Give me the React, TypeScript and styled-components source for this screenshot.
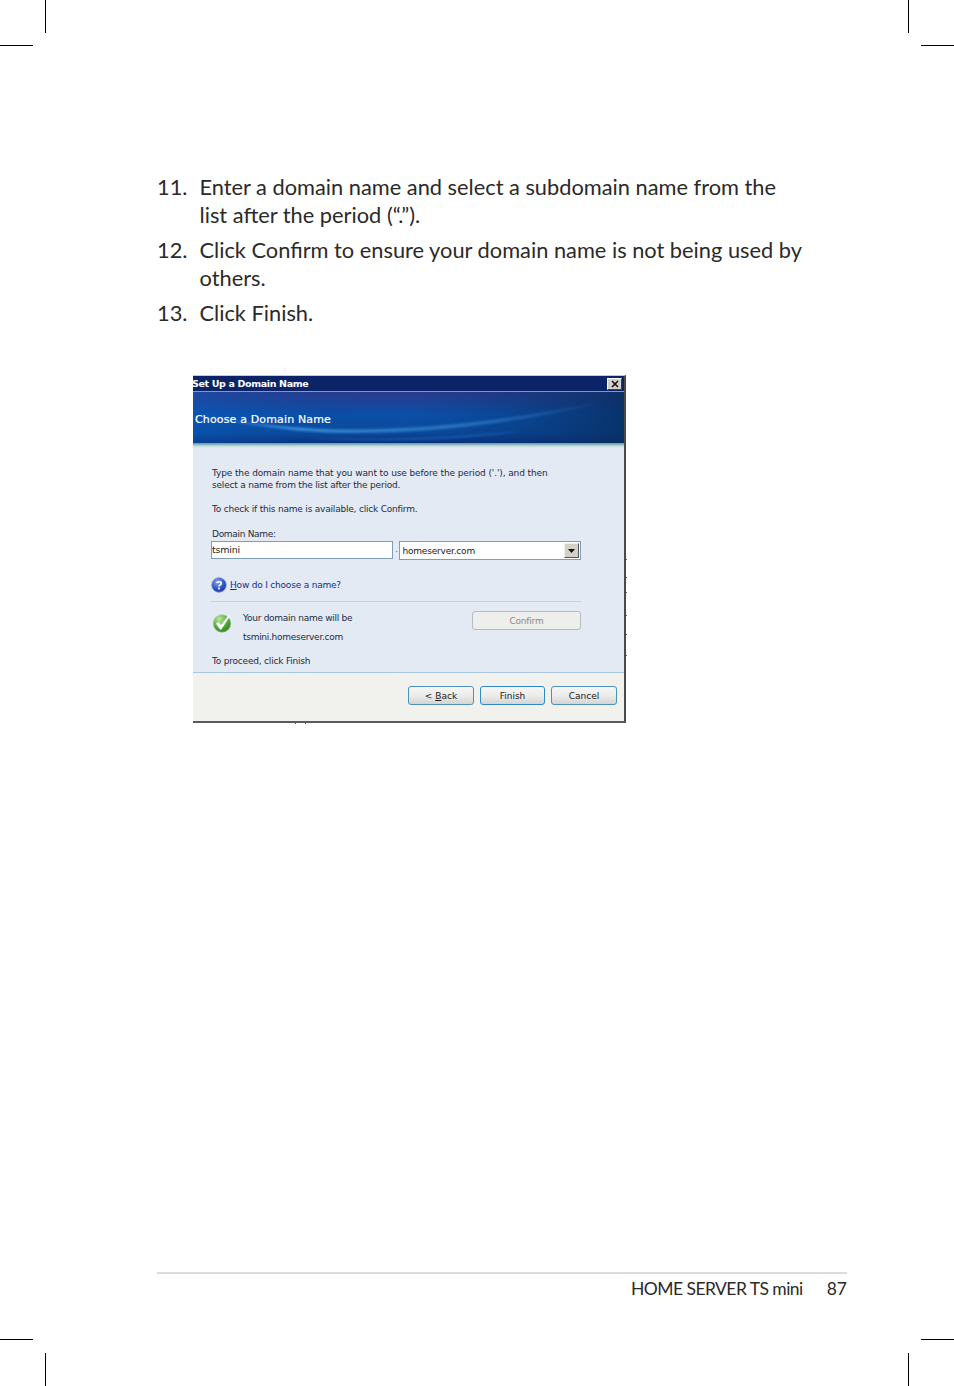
import { FunctionComponent } from 'react';
import styled, { createGlobalStyle } from 'styled-components';

const GlobalStyle = createGlobalStyle`
	html,
	body {
		margin: 0;
		padding: 0;
		background: #fff;
	}
`;

const Page = styled.div`
	position: relative;
	box-sizing: border-box;
	width: 954px;
	height: 1386px;
	padding: 173px 107px 0 157px;
	display: flex;
	flex-direction: column;
	font-family: Lato, 'Noto Sans', sans-serif;
	color: #2b2a29;
	overflow: hidden;
`;

const CropMark = styled.div<{ $x: number; $y: number; $w: number; $h: number }>`
	position: absolute;
	left: ${p => p.$x}px;
	top: ${p => p.$y}px;
	width: ${p => p.$w}px;
	height: ${p => p.$h}px;
	background: #000;
`;

const Steps = styled.ol`
	list-style: none;
	margin: 0;
	padding: 0;
	display: flex;
	flex-direction: column;
	gap: 7px;
`;

const Step = styled.li`
	display: grid;
	grid-template-columns: 42.5px 1fr;
	font-size: 21.8px;
	line-height: 28px;
`;

const Dialog = styled.div`
	position: relative;
	box-sizing: border-box;
	width: 433px;
	height: 348px;
	margin: 48px 0 0 36px;
	display: flex;
	flex-direction: column;
	border-top: 1px solid #c9c9c9;
	border-right: 2px solid #4a4a4a;
	border-bottom: 2px solid #5a5a5a;
	font-family: 'DejaVu Sans', sans-serif;
	font-size: 9px;
	color: #1d2a44;
`;

const EdgeTick = styled.div<{ $x: number; $y: number }>`
	position: absolute;
	left: ${p => p.$x}px;
	top: ${p => p.$y}px;
	width: 1px;
	height: 1px;
	background: #3d5a70;
`;

const TitleBar = styled.div`
	height: 15px;
	flex: none;
	display: flex;
	align-items: center;
	justify-content: space-between;
	box-sizing: content-box;
	background: #0b2468;
	color: #fff;
	font-size: 9.5px;
	font-weight: 700;
	border-bottom: 1px solid #8a97b4;
	padding-right: 2px;
`;

const TitleText = styled.span`
	margin-left: -1px;
	letter-spacing: -0.35px;
`;

const CloseBox = styled.div`
	width: 15px;
	height: 12px;
	display: flex;
	align-items: center;
	justify-content: center;
	background: #d4d0c8;
	border: 1px solid #fff;
	border-right-color: #404040;
	border-bottom-color: #404040;
	box-sizing: border-box;
`;

const Banner = styled.div`
	position: relative;
	flex: none;
	height: 47px;
	display: flex;
	align-items: center;
	padding: 4px 2px 0;
	background: #0a4a9e;
	overflow: hidden;
`;

const BannerArt = styled.svg`
	position: absolute;
	left: 0;
	top: 0;
	width: 100%;
	height: 100%;
`;

const BannerTitle = styled.div`
	position: relative;
	color: #fff;
	font-size: 11px;
	letter-spacing: 0.15px;
	-webkit-text-stroke: 0.2px #fff;
`;

const BannerEdge = styled.div`
	flex: none;
	height: 5px;
	background: linear-gradient(#6f92b4 0%, #7fb0bc 25%, #c3dcd8 60%, #e3eaf3 100%);
`;

const Body = styled.div`
	flex: 1;
	display: flex;
	flex-direction: column;
	padding: 19px 43px 0 19px;
	background: #e3eaf3;
	line-height: 12px;
	letter-spacing: -0.2px;
`;

const Paragraph = styled.p`
	margin: 0 0 12px;
	white-space: nowrap;
`;

const LooseLine = styled.span`
	letter-spacing: -0.115px;
`;

const FieldLabel = styled.div`
	margin-top: 1px;
	letter-spacing: -0.3px;
`;

const DomainRow = styled.div`
	display: flex;
	align-items: flex-start;
	margin: 1px 0 0 -1px;
	gap: 2px;
`;

const NameInput = styled.div`
	box-sizing: border-box;
	width: 182px;
	height: 18px;
	padding: 1px 0 0 0;
	background: #fff;
	border: 1px solid #7f9db9;
	color: #222;
	font-size: 9.5px;
	letter-spacing: -0.2px;
	line-height: 14px;
`;

const Dot = styled.span`
	width: 4px;
	text-align: center;
	line-height: 18px;
	font-size: 7px;
`;

const Combo = styled.div`
	box-sizing: border-box;
	width: 182px;
	height: 19px;
	margin-left: -1px;
	display: flex;
	align-items: center;
	justify-content: space-between;
	padding: 0 1px 0 2px;
	background: #fff;
	border: 1px solid #7f9db9;
	color: #222;
`;

const ComboArrow = styled.div`
	width: 15px;
	height: 15px;
	display: flex;
	align-items: center;
	justify-content: center;
	box-sizing: border-box;
	background: #d4d0c8;
	border: 1px solid #f2f0ea;
	border-right-color: #555;
	border-bottom-color: #555;
`;

const HelpRow = styled.div`
	display: flex;
	align-items: center;
	gap: 3px;
	margin: 17px 0 0 -1px;
`;

const HelpLink = styled.a`
	color: #0f2f92;
	text-decoration: none;

	u {
		text-decoration: underline;
	}
`;

const Rule = styled.div`
	height: 1px;
	background: #c8ced6;
	margin: 8px 0 0 -1px;
`;

const StatusRow = styled.div`
	display: flex;
	align-items: flex-start;
	margin-top: 9px;
`;

const StatusIcon = styled.div`
	width: 31px;
	flex: none;
	padding-top: 2px;
`;

const StatusText = styled.div`
	flex: 1;
	display: flex;
	flex-direction: column;
	gap: 7px;
	padding-top: 1px;
	letter-spacing: -0.28px;
`;

const ButtonFace = styled.div<{ $w: number; $focus?: boolean }>`
	box-sizing: border-box;
	width: ${p => p.$w}px;
	height: 19px;
	display: flex;
	align-items: center;
	justify-content: center;
	border: 1px solid ${p => (p.$focus ? '#2f86c8' : '#4f8fb8')};
	border-radius: 3px;
	background: linear-gradient(#f6f6f4 0%, #ececea 50%, #d4d5d3 100%);
	color: #222;
`;

const ConfirmButton = styled(ButtonFace)`
	border-color: #b5bcc4;
	background: #eeeeec;
	color: #8a8a8a;
`;

const Proceed = styled.div`
	margin-top: 12px;
`;

const DialogFooter = styled.div`
	flex: none;
	height: 49px;
	display: flex;
	justify-content: flex-end;
	gap: 6px;
	padding: 13px 7px 0 0;
	box-sizing: border-box;
	background: #f1f1ee;
	border-top: 1px solid #a9c8e0;
`;

const PageFooter = styled.footer`
	margin-top: auto;
	margin-bottom: 82px;
	width: 690px;
	border-top: 2px solid #dcdcdc;
	display: flex;
	justify-content: flex-end;
	gap: 24px;
	font-size: 17.5px;
	line-height: 30px;
`;

const FooterTitle = styled.span`
	letter-spacing: -0.55px;
`;

const cropMarks = [
	{ x: 45, y: 0, w: 1, h: 33 },
	{ x: 0, y: 45, w: 33, h: 1 },
	{ x: 908, y: 0, w: 1, h: 33 },
	{ x: 921, y: 45, w: 33, h: 1 },
	{ x: 0, y: 1339, w: 33, h: 1 },
	{ x: 45, y: 1353, w: 1, h: 33 },
	{ x: 921, y: 1339, w: 33, h: 1 },
	{ x: 908, y: 1353, w: 1, h: 33 },
];

const edgeTicks = [
	{ x: 433, y: 183 },
	{ x: 433, y: 201 },
	{ x: 433, y: 216 },
	{ x: 433, y: 239 },
	{ x: 433, y: 258 },
	{ x: 433, y: 279 },
	{ x: 102, y: 347 },
	{ x: 112, y: 347 },
];

const App: FunctionComponent = () => (
	<Page>
		<GlobalStyle />
		{cropMarks.map(m => (
			<CropMark key={`${m.x}-${m.y}`} $x={m.x} $y={m.y} $w={m.w} $h={m.h} />
		))}

		<Steps>
			<Step>
				<span>11.</span>
				<span>
					Enter a domain name and select a subdomain name from the
					<br />
					list after the period (“.”).
				</span>
			</Step>
			<Step>
				<span>12.</span>
				<span>
					Click Confirm to ensure your domain name is not being used by
					<br />
					others.
				</span>
			</Step>
			<Step>
				<span>13.</span>
				<span>Click Finish.</span>
			</Step>
		</Steps>

		<Dialog>
			{edgeTicks.map(t => (
				<EdgeTick key={`${t.x}-${t.y}`} $x={t.x} $y={t.y} />
			))}
			<TitleBar>
				<TitleText>Set Up a Domain Name</TitleText>
				<CloseBox>
					<svg width="8" height="8" viewBox="0 0 8 8">
						<path d="M1 1l6 6M7 1L1 7" stroke="#111" strokeWidth="1.6" />
					</svg>
				</CloseBox>
			</TitleBar>
			<Banner>
				<BannerArt viewBox="0 0 431 47" preserveAspectRatio="none">
					<defs>
						<linearGradient id="depth" x1="0" y1="0" x2="0" y2="1">
							<stop offset="0" stopColor="#2c3a8c" />
							<stop offset="0.45" stopColor="#0a50a8" />
							<stop offset="0.8" stopColor="#0a4a9c" />
							<stop offset="1" stopColor="#0a2f7c" />
						</linearGradient>
						<linearGradient id="fade" x1="0" y1="0" x2="1" y2="0">
							<stop offset="0" stopColor="#0860c8" stopOpacity="0.35" />
							<stop offset="0.5" stopColor="#0a3a80" stopOpacity="0" />
							<stop offset="1" stopColor="#082c5c" stopOpacity="0.8" />
						</linearGradient>
						<linearGradient id="swoosh" x1="0" y1="0" x2="1" y2="0">
							<stop offset="0" stopColor="#3f9be8" stopOpacity="0" />
							<stop offset="0.25" stopColor="#4aa4ee" stopOpacity="0.75" />
							<stop offset="0.7" stopColor="#3a8cd8" stopOpacity="0.55" />
							<stop offset="1" stopColor="#3a8cd8" stopOpacity="0" />
						</linearGradient>
						<filter id="soft" x="-5%" y="-30%" width="110%" height="160%">
							<feGaussianBlur stdDeviation="0.9" />
						</filter>
					</defs>
					<rect width="431" height="47" fill="url(#depth)" />
					<rect width="431" height="47" fill="url(#fade)" />
					<path
						d="M0 20C40 26 80 32 130 34 220 37 320 26 410 8L410 10C320 30 220 40 130 37 80 35 40 28 0 20Z"
						fill="url(#swoosh)"
						filter="url(#soft)"
					/>
					<path d="M110 42C180 45 260 42 330 36 260 45 180 47 110 42Z" fill="#2a7cd8" opacity="0.45" filter="url(#soft)" />
				</BannerArt>
				<BannerTitle>Choose a Domain Name</BannerTitle>
			</Banner>
			<BannerEdge />
			<Body>
				<Paragraph>
					<LooseLine>Type the domain name that you want to use before the period ('.'), and then</LooseLine>
					<br />
					select a name from the list after the period.
				</Paragraph>
				<Paragraph>To check if this name is available, click Confirm.</Paragraph>
				<FieldLabel>Domain Name:</FieldLabel>
				<DomainRow>
					<NameInput>tsmini</NameInput>
					<Dot>.</Dot>
					<Combo>
						homeserver.com
						<ComboArrow>
							<svg width="7" height="4" viewBox="0 0 7 4">
								<path d="M0 0h7L3.5 4z" fill="#111" />
							</svg>
						</ComboArrow>
					</Combo>
				</DomainRow>
				<HelpRow>
					<svg width="16" height="16" viewBox="0 0 16 16">
						<defs>
							<radialGradient id="help" cx="0.4" cy="0.3" r="0.8">
								<stop offset="0" stopColor="#8fa8ee" />
								<stop offset="0.6" stopColor="#2c4fc4" />
								<stop offset="1" stopColor="#1c3392" />
							</radialGradient>
						</defs>
						<circle cx="8" cy="8" r="7.3" fill="url(#help)" stroke="#7c96d8" strokeWidth="0.8" />
						<path d="M5.8 6.2C6 4.4 10.2 4.2 10.2 6.4 10.2 8 8 7.8 8 9.6" fill="none" stroke="#fff" strokeWidth="1.6" />
						<rect x="7.1" y="10.6" width="1.8" height="1.8" fill="#fff" />
					</svg>
					<HelpLink>
						<u>H</u>ow do I choose a name?
					</HelpLink>
				</HelpRow>
				<Rule />
				<StatusRow>
					<StatusIcon>
						<svg width="20" height="20" viewBox="0 0 20 20">
							<defs>
								<radialGradient id="ok" cx="0.35" cy="0.25" r="0.9">
									<stop offset="0" stopColor="#b8e89c" />
									<stop offset="0.55" stopColor="#4fa636" />
									<stop offset="1" stopColor="#2a7426" />
								</radialGradient>
							</defs>
							<circle cx="10" cy="10.5" r="8.8" fill="url(#ok)" stroke="#9cc890" strokeWidth="0.6" />
							<path d="M4 10.5L6.8 9 9 12 16.8 2 18 3 9.4 16.5 8 16.5z" fill="#fff" />
						</svg>
					</StatusIcon>
					<StatusText>
						<span>Your domain name will be</span>
						<span>tsmini.homeserver.com</span>
					</StatusText>
					<ConfirmButton $w={109}>Confirm</ConfirmButton>
				</StatusRow>
				<Proceed>To proceed, click Finish</Proceed>
			</Body>
			<DialogFooter>
				<ButtonFace $w={66}>
					<span>
						&lt; <u>B</u>ack
					</span>
				</ButtonFace>
				<ButtonFace $w={65} $focus>
					Finish
				</ButtonFace>
				<ButtonFace $w={66}>Cancel</ButtonFace>
			</DialogFooter>
		</Dialog>

		<PageFooter>
			<FooterTitle>HOME SERVER TS mini</FooterTitle>
			<span>87</span>
		</PageFooter>
	</Page>
);

export default App;
